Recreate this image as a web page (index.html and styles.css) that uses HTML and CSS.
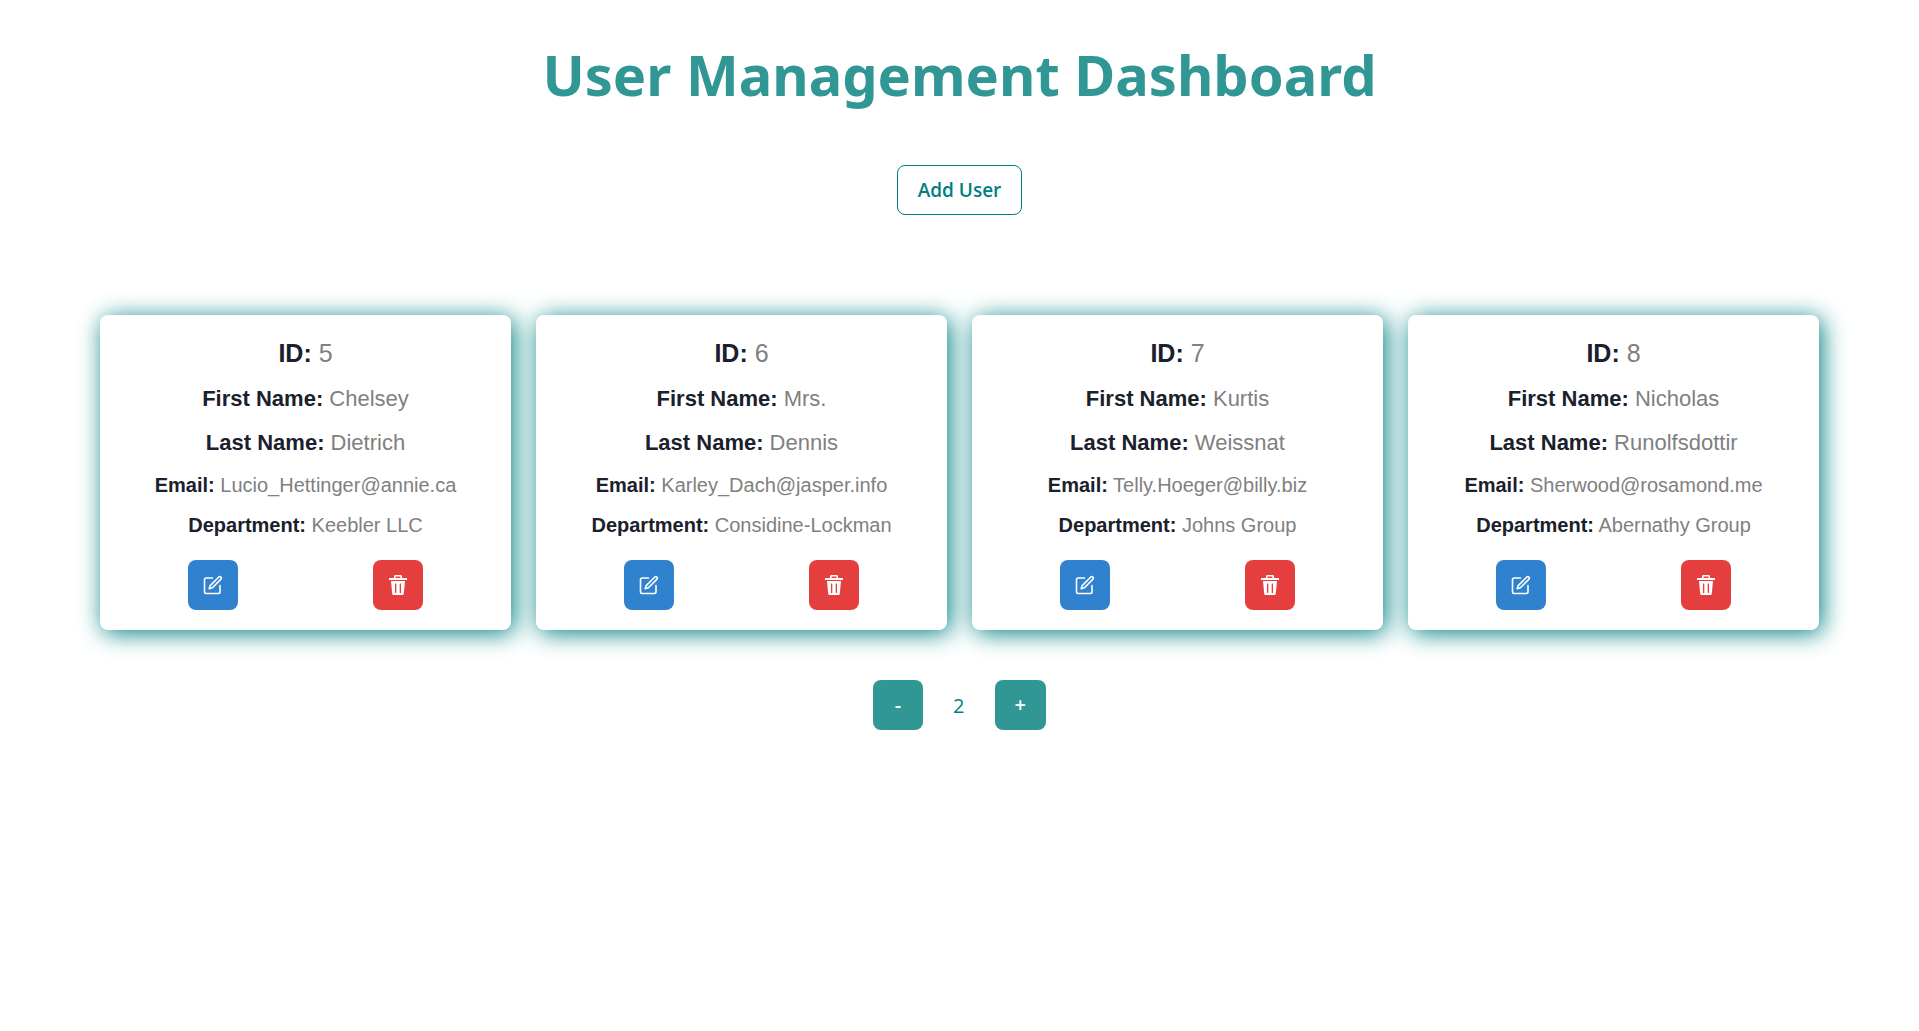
FILE: index.html
```html
<!DOCTYPE html>
<html lang="en">
<head>
<meta charset="utf-8">
<title>User Management Dashboard</title>
<link rel="stylesheet" href="styles.css">
</head>
<body>
<svg class="sprite" aria-hidden="true">
  <symbol id="icon-edit" viewBox="0 0 20 20">
    <g fill="none" stroke="currentColor" stroke-width="1.6" stroke-linecap="round" stroke-linejoin="round">
      <path d="M9.500 3H3.200C2.200 3 1.500 3.700 1.500 4.700V16.800C1.500 17.800 2.200 18.500 3.200 18.500H15.300C16.300 18.500 17 17.800 17 16.800V10.500"/>
      <path d="M6.200 13.800L7.200 10.600L15.600 2.200C17.200 .7 19.300 2.800 17.800 4.400L9.400 12.800Z"/>
    </g>
  </symbol>
  <symbol id="icon-trash" viewBox="0 0 20 20">
    <g fill="currentColor">
      <path fill-rule="evenodd" d="M6 3V1.500C6 .7 6.600 0 7.500 0H12.500C13.400 0 14 .7 14 1.500V3H19V5H1V3ZM7.600 3H12.400V1.500H7.600Z"/>
      <path fill-rule="evenodd" d="M3 6H17L15.800 18.700C15.700 19.500 15.200 20 14.400 20H5.600C4.800 20 4.300 19.500 4.200 18.700ZM7 8.500V18H8.300V8.500ZM11.700 8.500V18H13V8.500Z"/>
    </g>
  </symbol>
</svg>
<main class="page">
  <h1 class="title">User Management Dashboard</h1>
  <button class="btn btn-outline" type="button">Add User</button>
  <section class="cards" aria-label="Users">
    <article class="card">
      <p class="id"><b>ID:</b> 5</p>
      <p class="name"><b>First Name:</b> Chelsey</p>
      <p class="name"><b>Last Name:</b> Dietrich</p>
      <p class="detail"><b>Email:</b> Lucio_Hettinger@annie.ca</p>
      <p class="detail"><b>Department:</b> Keebler LLC</p>
      <div class="actions">
        <button class="btn btn-edit" type="button" aria-label="Edit user"><svg class="icon"><use href="#icon-edit"/></svg></button>
        <button class="btn btn-delete" type="button" aria-label="Delete user"><svg class="icon"><use href="#icon-trash"/></svg></button>
      </div>
    </article>
    <article class="card">
      <p class="id"><b>ID:</b> 6</p>
      <p class="name"><b>First Name:</b> Mrs.</p>
      <p class="name"><b>Last Name:</b> Dennis</p>
      <p class="detail"><b>Email:</b> Karley_Dach@jasper.info</p>
      <p class="detail"><b>Department:</b> Considine-Lockman</p>
      <div class="actions">
        <button class="btn btn-edit" type="button" aria-label="Edit user"><svg class="icon"><use href="#icon-edit"/></svg></button>
        <button class="btn btn-delete" type="button" aria-label="Delete user"><svg class="icon"><use href="#icon-trash"/></svg></button>
      </div>
    </article>
    <article class="card">
      <p class="id"><b>ID:</b> 7</p>
      <p class="name"><b>First Name:</b> Kurtis</p>
      <p class="name"><b>Last Name:</b> Weissnat</p>
      <p class="detail"><b>Email:</b> Telly.Hoeger@billy.biz</p>
      <p class="detail"><b>Department:</b> Johns Group</p>
      <div class="actions">
        <button class="btn btn-edit" type="button" aria-label="Edit user"><svg class="icon"><use href="#icon-edit"/></svg></button>
        <button class="btn btn-delete" type="button" aria-label="Delete user"><svg class="icon"><use href="#icon-trash"/></svg></button>
      </div>
    </article>
    <article class="card">
      <p class="id"><b>ID:</b> 8</p>
      <p class="name"><b>First Name:</b> Nicholas</p>
      <p class="name"><b>Last Name:</b> Runolfsdottir</p>
      <p class="detail"><b>Email:</b> Sherwood@rosamond.me</p>
      <p class="detail"><b>Department:</b> Abernathy Group</p>
      <div class="actions">
        <button class="btn btn-edit" type="button" aria-label="Edit user"><svg class="icon"><use href="#icon-edit"/></svg></button>
        <button class="btn btn-delete" type="button" aria-label="Delete user"><svg class="icon"><use href="#icon-trash"/></svg></button>
      </div>
    </article>
  </section>
  <nav class="pager" aria-label="Pagination">
    <button class="btn btn-page" type="button">-</button>
    <span class="page-number">2</span>
    <button class="btn btn-page" type="button">+</button>
  </nav>
</main>
</body>
</html>
```
FILE: styles.css
```css
* { box-sizing: border-box; }
body {
  margin: 0;
  background: #fff;
  color: #1a202c;
  font-family: "Segoe UI", "Open Sans", sans-serif;
  font-size: 20px;
}
.sprite { display: none; }
.page {
  display: flex;
  flex-direction: column;
  align-items: center;
  padding: 38px 100px;
}
.title {
  margin: 0;
  color: #319795;
  font-family: "Segoe UI", "Noto Sans", sans-serif;
  font-size: 56px;
  line-height: 72px;
  font-weight: 700;
}
.btn {
  display: inline-flex;
  align-items: center;
  justify-content: center;
  min-width: 50px;
  height: 50px;
  padding: 0 20px;
  border: 0;
  border-radius: 8px;
  color: #fff;
  font: inherit;
  font-weight: 600;
  line-height: 24px;
}
.btn-outline {
  margin-top: 55px;
  background: transparent;
  border: 1px solid teal;
  color: teal;
  font-size: 19px;
}
.cards {
  display: grid;
  grid-template-columns: repeat(4, 1fr);
  gap: 25px;
  align-self: stretch;
  margin-top: 100px;
}
.card {
  padding: 20px;
  border-radius: 8px;
  background: #fff;
  box-shadow: 3px 3px 25px teal;
  color: gray;
  font-family: "Liberation Sans", Arial, sans-serif;
  text-align: center;
}
.card p { margin: 0 0 10px; }
.card b { color: #1a202c; }
.id { font-size: 25px; line-height: 37px; }
.name { font-size: 22px; line-height: 34px; }
.detail { font-size: 20px; line-height: 30px; }
.actions {
  display: flex;
  justify-content: space-around;
  margin-top: 20px;
}
.actions .btn { padding: 0; }
.btn-edit { background: #3182ce; }
.btn-delete { background: #e53e3e; }
.icon { width: 20px; height: 20px; }
.pager {
  display: flex;
  align-items: center;
  gap: 30px;
  margin-top: 50px;
}
.btn-page { background: #319795; }
.page-number { color: teal; font-weight: 500; }
```
